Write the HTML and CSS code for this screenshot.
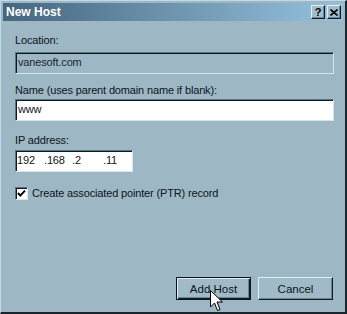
FILE: index.html
```html
<!DOCTYPE html>
<html>
<head>
	<meta charset="utf-8">
	<link rel="stylesheet" href="styles.css">
</head>
<body>
	<div class="window">
		<div class="titlebar">
			<span class="title">New Host</span>
			<div class="caption-btns">
				<span class="cbtn cbtn-help">?</span>
				<span class="cbtn">
					<svg width="8" height="7" viewBox="0 0 8 7"><path d="M0.5 0.5 L7.5 6.5 M7.5 0.5 L0.5 6.5" stroke="#000" stroke-width="1.6"/></svg>
				</span>
			</div>
		</div>

		<div class="content">
			<div class="lbl lbl-location">Location:</div>
			<div class="field field-disabled">vanesoft.com</div>

			<div class="lbl lbl-name">Name (uses parent domain name if blank):</div>
			<div class="field field-white">www</div>

			<div class="lbl lbl-ip">IP address:</div>
			<div class="field field-white field-ip">
				<span class="oct oct-1">192</span>
				<span class="oct oct-2">.168</span>
				<span class="oct oct-3">.2</span>
				<span class="oct">.11</span>
			</div>

			<div class="check-row">
				<span class="checkbox">
					<svg width="9" height="9" viewBox="0 0 9 9"><path d="M1 4 L3.3 6.6 L8 1.6" fill="none" stroke="#000" stroke-width="2"/></svg>
				</span>
				<span>Create associated pointer (PTR) record</span>
			</div>

			<div class="buttons">
				<div class="btn btn-default"><span>Add Host</span></div>
				<div class="btn"><span>Cancel</span></div>
			</div>
		</div>

		<!-- mouse pointer sitting over the default button -->
		<svg class="cursor" width="13" height="22" viewBox="0 0 13 22">
			<path d="M0.5 0.5 L0.5 17 L4.5 13 L7.5 20.5 L10 19.5 L7 12 L12.5 12 Z" fill="#fff" stroke="#000" stroke-width="1"/>
		</svg>
	</div>
</body>
</html>
```

FILE: styles.css
```css
html, body {
	margin: 0;
	padding: 0;
	background: #9db7c5;
}

.window {
	position: relative;
	width: 347px;
	height: 314px;
	box-sizing: border-box;
	padding: 2px;
	border-top: 1px solid #c4d9e5;
	border-left: 1px solid #c4d9e5;
	border-right: 2px solid #1b252c;
	border-bottom: 2px solid #1b252c;
	background: #9db7c5;
	display: flex;
	flex-direction: column;
	font-family: "Liberation Sans", Arial, sans-serif;
	font-size: 11px;
	color: #0d1519;
	overflow: hidden;
}

.titlebar {
	height: 18px;
	display: flex;
	align-items: center;
	justify-content: space-between;
	padding: 0 2px 0 3px;
	background: linear-gradient(to right, #45667f 0%, #6a90aa 45%, #95c2de 100%);
}
.title {
	font-size: 12px;
	font-weight: bold;
	color: #fff;
	line-height: 18px;
}
.caption-btns {
	display: flex;
	gap: 2px;
}
.cbtn {
	width: 14px;
	height: 14px;
	box-sizing: border-box;
	display: flex;
	align-items: center;
	justify-content: center;
	background: #a3bccb;
	border: 1px solid;
	border-color: #e2eef4 #141c21 #141c21 #e2eef4;
	box-shadow: inset -1px -1px 0 #6a8494;
}
.cbtn-help {
	font-weight: bold;
	font-size: 11px;
	line-height: 12px;
	color: #000;
}

.content {
	flex: 1;
	display: flex;
	flex-direction: column;
	padding: 0 9px 10px 12px;
	letter-spacing: -0.15px;
}

.lbl {
	line-height: 13px;
}
.lbl-location { margin-top: 13px; }
.lbl-name { margin-top: 10px; }
.lbl-ip { margin-top: 13px; }

.field {
	height: 22px;
	box-sizing: border-box;
	display: flex;
	align-items: center;
	padding: 0 0 1px 2px;
	border: 1px solid;
	border-color: #5b7381 #d4e6ef #d4e6ef #5b7381;
	box-shadow: inset 1px 1px 0 #0f181d;
	line-height: 13px;
}
.lbl-location + .field { margin-top: 5px; }
.lbl-name + .field { margin-top: 2px; }
.lbl-ip + .field { margin-top: 3px; }

.field-disabled {
	background: #9db7c5;
	color: #1a262d;
}
.field-white {
	background: #fff;
}
.field-ip {
	width: 118px;
	padding-left: 1px;
}
.oct-1 { width: 27px; }
.oct-2 { width: 28px; }
.oct-3 { width: 31px; }

.check-row {
	margin-top: 15px;
	display: flex;
	align-items: center;
	gap: 4px;
	line-height: 13px;
}
.checkbox {
	width: 13px;
	height: 13px;
	box-sizing: border-box;
	display: flex;
	align-items: center;
	justify-content: center;
	background: #fff;
	border: 1px solid;
	border-color: #5b7381 #d4e6ef #d4e6ef #5b7381;
	box-shadow: inset 1px 1px 0 #0f181d;
}

.buttons {
	margin-top: auto;
	display: flex;
	justify-content: flex-end;
	gap: 7px;
	padding-right: 1px;
	letter-spacing: 0;
}
.btn {
	width: 75px;
	height: 23px;
	box-sizing: border-box;
	display: flex;
	align-items: center;
	justify-content: center;
	background: #a0bac8;
	border: 1px solid;
	border-color: #e0edf3 #141c21 #141c21 #e0edf3;
	box-shadow: inset -1px -1px 0 #6a8494;
	font-size: 11.5px;
}
.btn-default {
	border-color: #0d1418;
	box-shadow: inset 1px 1px 0 #e0edf3, inset -1px -1px 0 #141c21, inset -2px -2px 0 #6a8494;
}

.cursor {
	position: absolute;
	left: 209px;
	top: 289px;
}
```
